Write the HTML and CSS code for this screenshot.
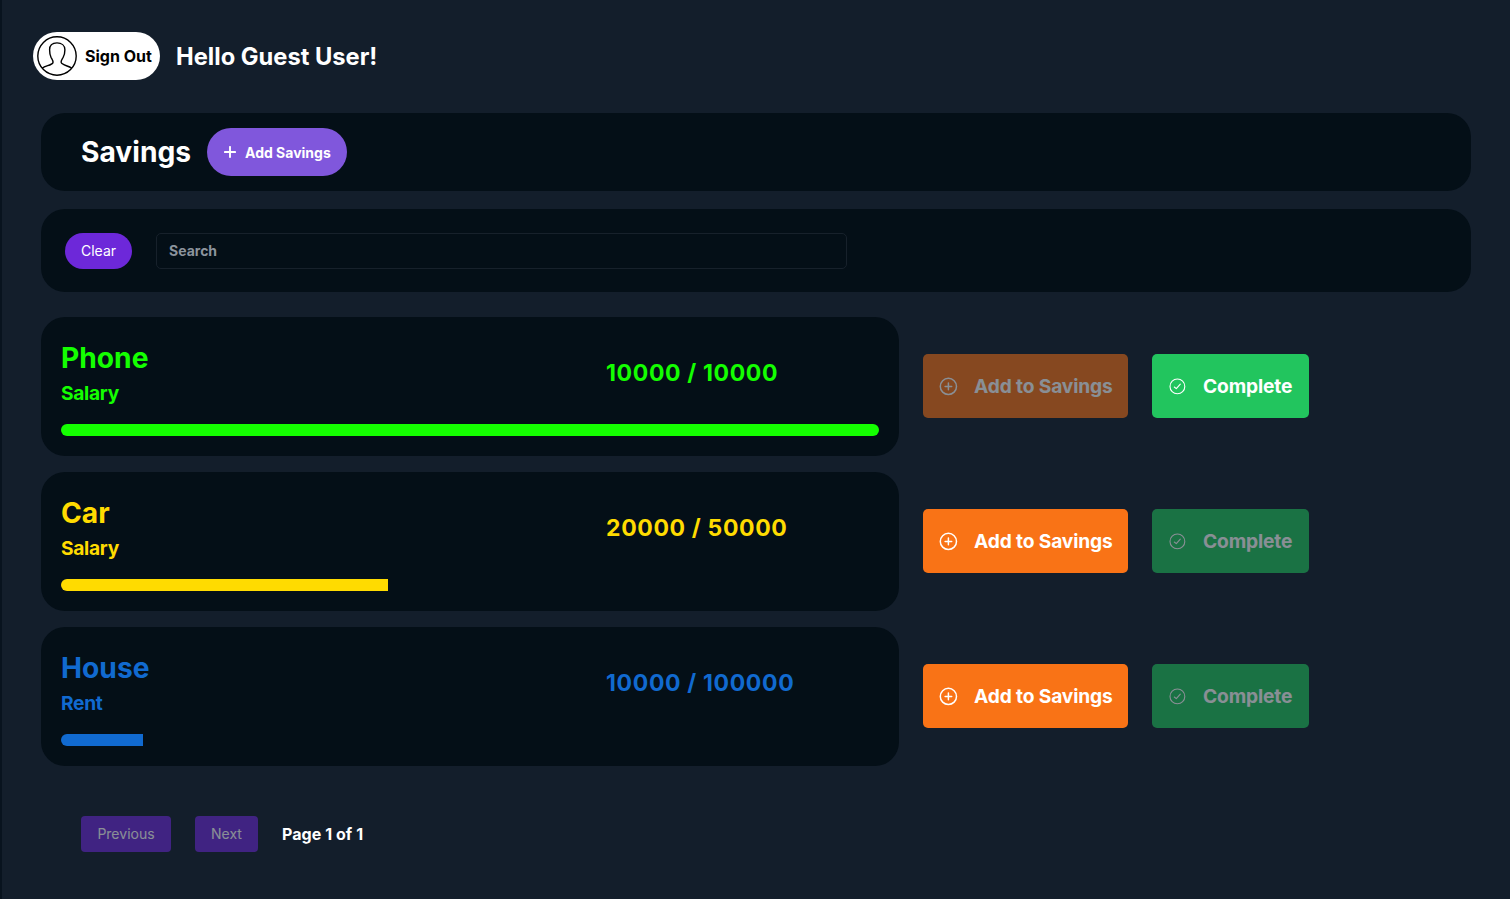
FILE: index.html
```html
<!DOCTYPE html>
<html lang="en">
<head>
<meta charset="utf-8">
<title>Savings</title>
<link rel="stylesheet" href="styles.css">
</head>
<body>
<svg class="sprite" width="0" height="0">
  <symbol id="plus-circle" viewBox="0 0 20 20"><g fill="none" stroke="currentColor" stroke-width="1.5" stroke-linecap="round"><circle cx="10.400" cy="10.400" r="8.1"/><path d="M10.400 7.100v6.600M7.100 10.400h6.600"/></g></symbol>
  <symbol id="check-circle" viewBox="0 0 20 20"><g fill="none" stroke="currentColor" stroke-width="1.1" stroke-linecap="round" stroke-linejoin="round"><circle cx="10.400" cy="10.400" r="7.400"/><path d="M7.300 11l2 1.700 4-4.500"/></g></symbol>
</svg>
<div class="page">
  <header class="topbar">
    <button class="sign-out">
      <svg class="avatar" viewBox="0 0 40 40" fill="none" stroke="#000" stroke-width="1.4"><circle cx="20" cy="20" r="19.2"/><path d="M5.2 32.2C8.7 29.6 14.800 29.300 16 26.600C16.400 24.800 15.300 23.600 14 21.300C12.900 19 12.600 16.500 12.600 13.800C12.600 9.500 15.500 6.900 20 6.900S27.900 9.500 27.900 13.800C27.900 16.500 27.400 19 26.200 21.300C25 23.600 23.700 24.800 24.200 26.600C25.300 29.300 31.300 29.600 34.800 32.200"/></svg>
      <span>Sign Out</span>
    </button>
    <h2 class="greeting">Hello Guest User!</h2>
  </header>
  <section class="panel title-panel">
    <h1 class="title">Savings</h1>
    <button class="add"><svg class="plus" viewBox="0 0 12 12" stroke="#fff" stroke-width="1.9" stroke-linecap="round"><path d="M6 .9v10.2M.9 6h10.2"/></svg>Add Savings</button>
  </section>
  <section class="panel search-panel">
    <button class="clear">Clear</button>
    <input class="search" type="text" placeholder="Search">
  </section>
  <main class="list">
    <div class="row">
      <article class="card green">
        <div class="info"><div class="names"><h3>Phone</h3><p>Salary</p></div><div class="amount">10000 / 10000</div></div>
        <div class="track"><div class="fill" style="width:100%"></div></div>
      </article>
      <button class="action orange off"><svg><use href="#plus-circle"/></svg>Add to Savings</button>
      <button class="action done"><svg><use href="#check-circle"/></svg>Complete</button>
    </div>
    <div class="row">
      <article class="card yellow">
        <div class="info"><div class="names"><h3>Car</h3><p>Salary</p></div><div class="amount">20000 / 50000</div></div>
        <div class="track"><div class="fill" style="width:40%"></div></div>
      </article>
      <button class="action orange"><svg><use href="#plus-circle"/></svg>Add to Savings</button>
      <button class="action done off"><svg><use href="#check-circle"/></svg>Complete</button>
    </div>
    <div class="row">
      <article class="card blue">
        <div class="info"><div class="names"><h3>House</h3><p>Rent</p></div><div class="amount">10000 / 100000</div></div>
        <div class="track"><div class="fill" style="width:10%"></div></div>
      </article>
      <button class="action orange"><svg><use href="#plus-circle"/></svg>Add to Savings</button>
      <button class="action done off"><svg><use href="#check-circle"/></svg>Complete</button>
    </div>
  </main>
  <footer class="pager">
    <button class="prev">Previous</button>
    <button class="next">Next</button>
    <span>Page 1 of 1</span>
  </footer>
</div>
</body>
</html>
```
FILE: styles.css
```css
* { box-sizing: border-box; }
body { margin: 0; background: #131e2b; font-family: Inter, "Liberation Sans", sans-serif; color: #fff; }
h1, h2, h3, p { margin: 0; }
button { border: 0; margin: 0; font-family: inherit; color: #fff; display: flex; align-items: center; white-space: nowrap; }
.sprite { display: block; }
.page { height: 899px; padding: 32px 39px 0 39px; border-left: 2px solid #08131e; overflow: hidden; }
.topbar { display: flex; align-items: center; gap: 16px; height: 48px; margin-left: -8px; }
.sign-out { width: 127px; height: 48px; border-radius: 24px; background: #fff; color: #000; padding: 0 0 0 4px; gap: 8px; font-size: 16px; font-weight: 700; }
.avatar { width: 40px; height: 40px; flex: none; }
.greeting { font-size: 23.700px; line-height: 32px; font-weight: 700; margin-top: 1px; }
.panel { display: flex; align-items: center; background: #040f17; border-radius: 24px; width: 1430px; }
.title-panel { margin-top: 33px; height: 78px; padding-left: 40px; gap: 17px; }
.title { font-size: 28.200px; font-weight: 700; width: 109px; white-space: nowrap; margin-top: -1px; }
.add { width: 140px; height: 48px; border-radius: 24px; background: #8057dc; padding: 0 0 0 17px; gap: 9px; font-size: 14px; font-weight: 700; }
.plus { width: 12px; height: 12px; }
.search-panel { margin-top: 18px; height: 83px; padding-left: 24px; gap: 24px; }
.clear { width: 67px; height: 36px; border-radius: 18px; background: #6d28d9; justify-content: center; font-size: 14px; padding: 0; }
.search { width: 691px; height: 36px; border: 1px solid #17212b; border-radius: 5px; background: transparent; padding: 0 12px; font: 700 14px Inter, sans-serif; color: #fff; outline: 0; }
.search::placeholder { color: #8c949d; opacity: 1; }
.list { display: flex; flex-direction: column; gap: 16px; margin-top: 25px; }
.row { display: flex; align-items: flex-start; }
.card { width: 858px; height: 139px; background: #040f17; border-radius: 24px; padding: 20px; margin-right: 24px; }
.info { display: flex; height: 87px; }
.names { width: 545px; }
.names h3 { font-size: 28.200px; line-height: 42px; font-weight: 700; }
.names p { font-size: 19.200px; line-height: 28px; font-weight: 700; letter-spacing: -.3px; }
.amount { font-size: 23px; line-height: 32px; font-weight: 700; letter-spacing: .65px; margin-top: 20px; }
.track { height: 12px; border-radius: 6px; overflow: hidden; }
.fill { height: 12px; background: currentColor; }
.green { color: #14ff00; }
.yellow { color: #ffdb00; }
.blue { color: #116ad0; }
.action { height: 64px; margin-top: 37px; border-radius: 5px; font-size: 19.200px; font-weight: 700; letter-spacing: -.15px; padding: 0 0 0 15px; gap: 16px; }
.action svg { width: 20px; height: 20px; flex: none; }
.orange { width: 205px; background: #f97316; margin-right: 24px; }
.done { width: 157px; background: #22c55e; }
.off { opacity: .5; }
.pager { display: flex; align-items: center; margin: 50px 0 0 40px; gap: 24px; font-size: 16px; font-weight: 700; }
.pager button { height: 36px; border-radius: 4px; background: #6d28d9; opacity: .5; justify-content: center; padding: 0 0 1px; font-size: 14px; }
.prev { width: 90px; }
.next { width: 63px; }
.pager span { letter-spacing: .06px; }
```
